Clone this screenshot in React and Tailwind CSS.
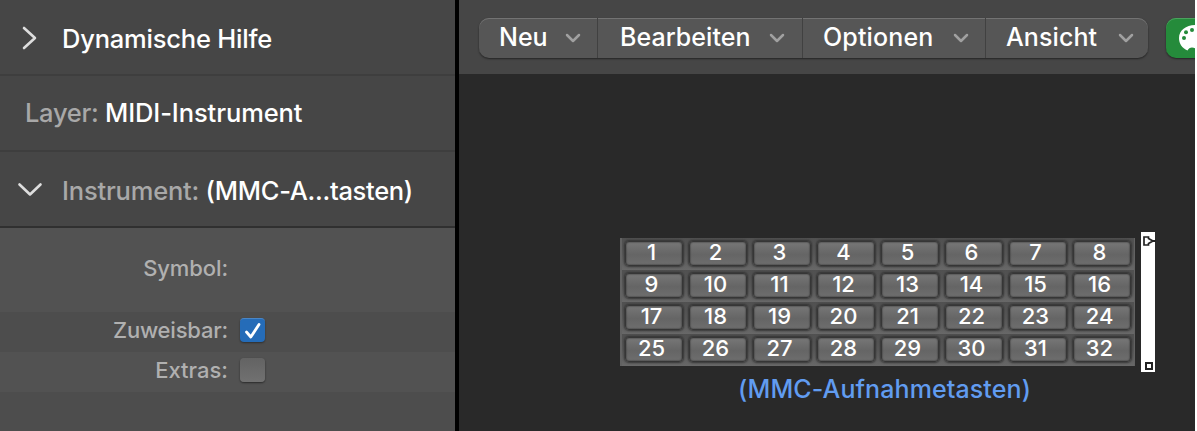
import React from "react";

const menus = [
  { label: "Neu", box: "w-[119px] pl-[20px]", text: "tracking-[0px]", arrow: "ml-[17px]" },
  { label: "Bearbeiten", box: "w-[205px] pl-[22px]", text: "tracking-[0.05px]", arrow: "ml-[18px]" },
  { label: "Optionen", box: "w-[183px] pl-[20px]", text: "tracking-[0.15px]", arrow: "ml-[19px]" },
  { label: "Ansicht", box: "w-[162px] pl-[20px]", text: "tracking-[0.1px]", arrow: "ml-[21px]" },
];

const keys = Array.from({ length: 32 }, (_, i) => i + 1);

const MenuArrow = () => (
  <svg width="16" height="10" viewBox="0 0 16 10" fill="none">
    <path d="M2 2l6 6 6-6" stroke="#a0a0a0" strokeWidth="2.500" strokeLinecap="round" strokeLinejoin="round" />
  </svg>
);

const Field = ({ label, text, className, children }) => (
  <div className={`flex items-center pb-1 ${className}`}>
    <span className={`w-[228px] text-right text-[22px] leading-7 text-[#b0b0b0] whitespace-nowrap ${text}`}>{label}</span>
    <span className="ml-[12px] flex w-[25px]">{children}</span>
  </div>
);

const Inspector = () => (
  <aside className="flex w-[455px] shrink-0 flex-col bg-[#464646]">
    <div className="flex h-[76px] items-center border-b-2 border-[#3e3e3e] pt-[4px]">
      <svg className="mb-[2px] ml-[22px]" width="16" height="26" viewBox="0 0 16 26" fill="none">
        <path d="M2 3l11 10L2 23" stroke="#dedede" strokeWidth="2.600" strokeLinecap="round" strokeLinejoin="round" />
      </svg>
      <span className="ml-[24px] text-[25.5px] tracking-[-0.2px] text-white whitespace-nowrap">Dynamische Hilfe</span>
    </div>

    <div className="flex h-[76px] items-center border-b-2 border-[#3e3e3e] pl-[25px] text-[25.5px] whitespace-nowrap">
      <span className="tracking-[-0.3px] text-[#a8a8a8]">Layer:</span>
      <span className="ml-[6.5px] tracking-[-0.1px] text-white">MIDI-Instrument</span>
    </div>

    <div className="flex h-[76px] items-center border-b-2 border-[#303030] pt-[4px] text-[25.5px] whitespace-nowrap">
      <svg className="mb-[2px] ml-[17px]" width="26" height="16" viewBox="0 0 26 16" fill="none">
        <path d="M2.500 2.500l10.500 10 10.500-10" stroke="#dedede" strokeWidth="2.600" strokeLinecap="round" strokeLinejoin="round" />
      </svg>
      <span className="ml-[19px] tracking-[-0.2px] text-[#a8a8a8]">Instrument:</span>
      <span className="ml-[6.5px] tracking-[-0.3px] text-white">(MMC-A...tasten)</span>
    </div>

    <Field label="Symbol:" text="tracking-[-0.1px]" className="h-[84px] bg-[#525252]" />
    <Field label="Zuweisbar:" text="tracking-[-0.2px]" className="h-10 bg-[#4d4d4d]">
      <span className="flex h-6 w-[25px] items-center justify-center rounded-[4px] border-t border-[#4a86c6] bg-[#256cb8] shadow-[0_1px_2px_rgba(0,0,0,0.4)]">
        <svg width="18" height="18" viewBox="0 0 18 18" fill="none">
          <path d="M2.500 10l4.300 5L15 2.500" stroke="#fff" strokeWidth="2.800" strokeLinecap="round" strokeLinejoin="round" />
        </svg>
      </span>
    </Field>
    <Field label="Extras:" text="tracking-[0px]" className="h-10 bg-[#525252]">
      <span className="h-6 w-[25px] rounded-[4px] bg-linear-to-b from-[#636363] to-[#717171] shadow-[0_1px_2px_rgba(0,0,0,0.5)]" />
    </Field>
    <div className="flex-1 bg-[#4d4d4d]" />
  </aside>
);

const Toolbar = () => (
  <div className="flex h-[74px] items-start overflow-hidden bg-[#464646] pt-[18px] pl-[20px]">
    <div className="flex h-10 shrink-0 overflow-hidden rounded-[10px] bg-[#565656] shadow-[inset_0_1px_0_#737373,0_1px_2px_rgba(0,0,0,0.5)]">
      {menus.map((menu) => (
        <div
          key={menu.label}
          className={`flex h-10 items-center border-r-[1.5px] border-[#414141] last:border-r-0 ${menu.box}`}
        >
          <span className={`text-[25px] text-white whitespace-nowrap ${menu.text}`}>{menu.label}</span>
          <span className={`shrink-0 ${menu.arrow}`}>
            <MenuArrow />
          </span>
        </div>
      ))}
    </div>
    <div className="ml-[18px] flex h-10 w-[60px] shrink-0 items-center rounded-[10px] bg-[#258b3b] pl-[12px] shadow-[inset_0_1px_0_#4ba25e,0_1px_2px_rgba(0,0,0,0.5)]">
      <svg className="shrink-0" width="34" height="28" viewBox="0 0 34 28">
        <path
          d="M17 1C8 1 1 6.500 1 14c0 5.500 3 10 8.500 12.500C10.500 24.500 12 23.500 14 23.500c3 0 5 2.500 9 2.500 6 0 10-5 10-11C33 7 25 1 17 1z"
          fill="#fff"
        />
        <circle cx="6" cy="14" r="2" fill="#258b3b" />
        <circle cx="8" cy="8.300" r="2" fill="#258b3b" />
        <circle cx="14" cy="6" r="2" fill="#258b3b" />
      </svg>
    </div>
  </div>
);

const KeyPad = () => (
  <div className="grid h-32 w-[515px] grid-cols-[repeat(8,64px)] grid-rows-[repeat(4,32px)] bg-[#626262] pl-[2px]">
    {keys.map((key) => (
      <div key={key} className="flex bg-linear-to-b from-[#505050] via-[#585858] to-[#686868] pt-[3px] pl-[3px]">
        <div className="flex h-[25px] w-[58px] items-center justify-center rounded-[4px] border border-[#363636] bg-linear-to-b from-[#777777] from-0% via-[#656565] via-55% to-[#6e6e6e] to-100% pr-[5px] pb-[4px] text-[22px] leading-6 text-white shadow-[0_0_2px_1px_rgba(40,40,40,0.75),inset_0_0_1px_1px_rgba(50,50,50,0.35)]">
          {key}
        </div>
      </div>
    ))}
  </div>
);

const Environment = () => (
  <main className="flex flex-1 flex-col overflow-hidden bg-[#292929]">
    <Toolbar />
    <div className="flex pt-[158px] pl-[161px]">
      <div className="pt-[6px]">
        <KeyPad />
        <p className="mt-[8px] w-[529px] text-center text-[25px] leading-[30px] tracking-[0.1px] text-[#619cf0] whitespace-nowrap">
          (MMC-Aufnahmetasten)
        </p>
      </div>
      <svg className="-ml-[8px]" width="15" height="140" viewBox="0 0 15 140">
        <rect width="14" height="140" fill="#fff" />
        <path d="M3 5h4.500v1.500L12 9l-4.500 2.500V13H3z" fill="#fff" stroke="#222" strokeWidth="1.700" />
        <path d="M11 9h4" stroke="#222" strokeWidth="2" />
        <rect x="5" y="131" width="6" height="6" fill="#fff" stroke="#222" strokeWidth="2" />
      </svg>
    </div>
  </main>
);

export default function App() {
  return (
    <div className="flex h-[431px] w-[1197px] overflow-hidden bg-black font-['Inter',sans-serif] font-medium">
      <Inspector />
      <div className="w-1 shrink-0 bg-black" />
      <Environment />
      <div className="w-[2px] shrink-0 bg-white" />
    </div>
  );
}
